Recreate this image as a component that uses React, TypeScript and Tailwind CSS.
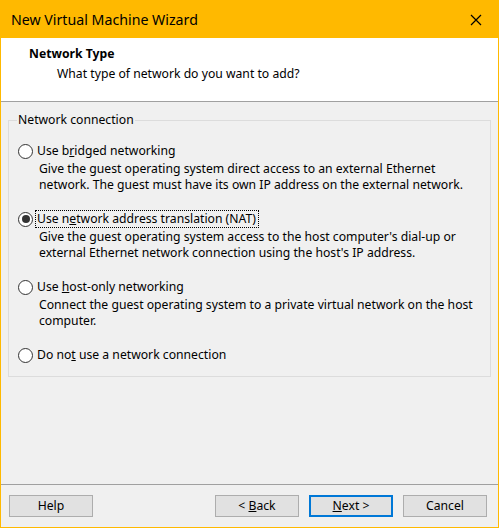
import React from 'react'

const font = { fontFamily: '"Noto Sans", "Open Sans", sans-serif' }

function Radio({ checked }: { checked?: boolean }) {
  return (
    <span className="w-[15px] h-[15px] rounded-full border border-[#333333] bg-white flex items-center justify-center shrink-0">
      {checked && <span className="w-[8px] h-[8px] rounded-full bg-[#333333]" />}
    </span>
  )
}

function Option({
  label,
  desc,
  checked,
  focused,
}: {
  label: React.ReactNode
  desc?: React.ReactNode
  checked?: boolean
  focused?: boolean
}) {
  return (
    <div>
      <div className="flex items-center h-[16px]">
        <Radio checked={checked} />
        <span
          className={
            focused
              ? 'ml-[3px] pl-[1px] pr-[2px] outline-1 outline-dotted outline-black leading-[16px]'
              : 'ml-[4px] leading-[16px]'
          }
        >
          {label}
        </span>
      </div>
      {desc && <p className="ml-[21px] mt-[2px] leading-[16px] w-[445px]">{desc}</p>}
    </div>
  )
}

function Btn({ children, primary }: { children: React.ReactNode; primary?: boolean }) {
  return (
    <button
      className={
        primary
          ? 'w-[84px] h-[22px] bg-[#e1e1e1] border-2 border-[#0078d7] text-[12.2px] text-black'
          : 'w-[84px] h-[22px] bg-[#e1e1e1] border border-[#adadad] text-[12.2px] text-black'
      }
    >
      {children}
    </button>
  )
}

export default function App() {
  return (
    <div
      className="w-[499px] h-[528px] bg-[#f0f0f0] border border-t-0 border-[#ffb900] flex flex-col text-[12.2px] text-black overflow-hidden"
      style={font}
    >
      {/* title bar */}
      <div className="h-[38px] bg-[#ffb900] flex items-center justify-between pl-[10px] pr-[16px] pt-[1px] shrink-0">
        <span className="text-[14.2px]">New Virtual Machine Wizard</span>
        <svg width="12" height="12" viewBox="0 0 12 12">
          <path d="M1 1 L11 11 M11 1 L1 11" stroke="#000" strokeWidth="1.2" />
        </svg>
      </div>

      {/* header */}
      <div className="h-[64px] bg-white border-b border-[#a0a0a0] pt-[8px] shrink-0">
        <div className="pl-[28px] font-bold leading-[16px]">Network Type</div>
        <div className="pl-[56px] mt-[4px] leading-[16px]">What type of network do you want to add?</div>
      </div>

      {/* group box */}
      <div className="mx-[7px] mt-[18px] h-[257px] border border-[#dcdcdc] relative pt-[22px] pl-[9px]">
        <span className="absolute -top-[9px] left-[8px] bg-[#f0f0f0] px-[1px] leading-[16px]">Network connection</span>
        <div className="flex flex-col gap-[18px]">
          <Option
            label={<>Use b<u>r</u>idged networking</>}
            desc="Give the guest operating system direct access to an external Ethernet network. The guest must have its own IP address on the external network."
          />
          <Option
            checked
            focused
            label={<>Use n<u>e</u>twork address translation (NAT)</>}
            desc="Give the guest operating system access to the host computer's dial-up or external Ethernet network connection using the host's IP address."
          />
          <Option
            label={<>Use <u>h</u>ost-only networking</>}
            desc="Connect the guest operating system to a private virtual network on the host computer."
          />
          <Option label={<>Do no<u>t</u> use a network connection</>} />
        </div>
      </div>

      <div className="flex-1" />

      {/* footer */}
      <div className="border-t border-[#a0a0a0] h-[43px] shrink-0 flex items-start pt-[10px] pl-[8px] pr-[11px]">
        <Btn>Help</Btn>
        <div className="flex-1" />
        <div className="flex gap-[10px]">
          <Btn>
            &lt; <u>B</u>ack
          </Btn>
          <Btn primary>
            <u>N</u>ext &gt;
          </Btn>
          <Btn>Cancel</Btn>
        </div>
      </div>
    </div>
  )
}
